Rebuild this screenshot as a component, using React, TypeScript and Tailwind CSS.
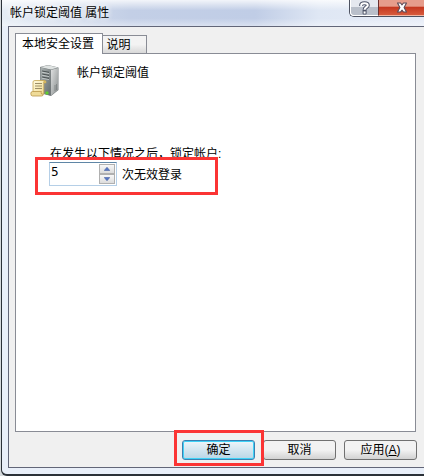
import { useState } from "react";

const pushButtonClass =
  "h-5 w-[73px] rounded-[3px] border text-xs leading-none whitespace-nowrap text-black bg-linear-to-b";

function HelpIcon() {
  const hook = "M2.2 5V4.2C2.2 1.6 8.8 1.6 8.8 4.2C8.8 6.2 5.6 6.2 5.6 8.8";
  return (
    <svg width="11" height="14" viewBox="0 0 11 14" fill="none" aria-hidden="true">
      <path d={hook} stroke="#50566a" strokeWidth="4" />
      <rect x="3.6" y="8.6" width="4" height="5" rx="1" fill="#50566a" />
      <path d={hook} stroke="#fff" strokeWidth="2" />
      <rect x="4.6" y="10.4" width="2" height="2.2" fill="#fff" />
    </svg>
  );
}

function CloseIcon() {
  const shape = "M1 0.5H4L5.5 2.4L7 0.5H10L7.6 5L10 9.5H7L5.5 7.6L4 9.5H1L3.4 5Z";
  return (
    <svg width="12" height="11" viewBox="-0.5 -0.5 12 11" aria-hidden="true">
      <path d={shape} fill="#fff" stroke="#5c4a57" strokeWidth="1.1" strokeLinejoin="round" />
    </svg>
  );
}

function ServerIcon() {
  return (
    <svg width="32" height="34" viewBox="0 0 32 34" aria-hidden="true">
      <defs>
        <linearGradient id="front" x1="0" y1="0" x2="1" y2="1">
          <stop offset="0" stopColor="#a9b0b0" />
          <stop offset="1" stopColor="#666d6e" />
        </linearGradient>
        <linearGradient id="side" x1="0" y1="0" x2="1" y2="1">
          <stop offset="0" stopColor="#dfe1e1" />
          <stop offset="1" stopColor="#8b9090" />
        </linearGradient>
        <linearGradient id="paper" x1="0" y1="0" x2="1" y2="1">
          <stop offset="0" stopColor="#fffbe0" />
          <stop offset="1" stopColor="#f0d88a" />
        </linearGradient>
      </defs>
      <path d="M11 2L19 0L29.5 2.5V25L22 31L11 28Z" fill="#777d7e" />
      <path d="M11.5 2.2L19 0.3L29 2.6L22 4.6Z" fill="#dfe3e2" />
      <path d="M11.5 2.6L21.5 4.8V30.5L11.5 28Z" fill="url(#front)" />
      <path d="M22 5L29 3V24.8L22 30.5Z" fill="url(#side)" />
      <path d="M13 6L20 7.4M13 9L20 10.4M13 12L20 13.4" stroke="#4e5556" strokeWidth="1.2" />
      <path d="M13 7.2L20 8.6M13 10.2L20 11.6M13 13.2L20 14.6" stroke="#d4dada" strokeWidth="0.7" />
      <path d="M26 20V26M27.5 19V25" stroke="#6c7273" strokeWidth="0.6" />
      <path d="M4 17Q4 15.5 6 15.5H16Q14.8 16.5 14.8 18V29H4Z" fill="url(#paper)" stroke="#c7a650" strokeWidth="0.8" />
      <path d="M14.8 18Q14.8 15.5 16.3 15.7Q17.3 16 17 18Z" fill="#e5c66c" stroke="#c7a650" strokeWidth="0.6" />
      <path d="M1.8 28.5Q1.8 26.5 3.5 26.5H12.5Q11.8 27.6 12.5 29Q13.2 30 14.4 29.5Q14 31 12.5 31H3.5Q1.8 31 1.8 28.5Z" fill="#efdb98" stroke="#b9974a" strokeWidth="0.8" />
      <path d="M6 18.5H13M6 21H13M6 23.5H13" stroke="#92835e" strokeWidth="0.9" />
      <rect x="16.5" y="26.5" width="3" height="3" rx="1" fill="#5ed02c" />
    </svg>
  );
}

function SpinButton({ up, onClick }: { up?: boolean; onClick: () => void }) {
  return (
    <button
      type="button"
      aria-label={up ? "增加" : "减少"}
      onClick={onClick}
      className="flex flex-1 items-center justify-center border border-[#b0b0b0] bg-linear-to-b from-[#f8f8f8] to-[#dcdcdc]"
    >
      <svg width="6" height="4" viewBox="0 0 6 4" aria-hidden="true">
        <path d={up ? "M3 0.2L5.8 3.5H0.2Z" : "M3 3.8L5.8 0.5H0.2Z"} fill="#5576c4" stroke="#3b549b" strokeWidth="0.5" />
      </svg>
    </button>
  );
}

export default function App() {
  const [attempts, setAttempts] = useState(5);

  return (
    <div className="flex min-h-screen flex-col bg-[#d5d9dc] pl-px font-['Liberation_Sans','Noto_Sans_CJK_SC',sans-serif] text-xs text-black">
      <div className="flex flex-1 flex-col rounded-bl-md border-b-2 border-l border-[#2b3138] bg-[#e9eff9] pl-1.5">
        <header className="-ml-1.5 flex h-[26px] items-start justify-between bg-[linear-gradient(to_bottom,#ffffffcc,#ffffff00_40%,#ffffff00_70%,#ffffff66),linear-gradient(to_right,#e6edf5,#c3cfe6_30%,#c0cde6_60%,#dfe7f4_75%,#e6ecf7)] pl-2">
          <h1 className="pt-[5px] leading-4 [text-shadow:0_0_6px_white,0_0_6px_white]">帐户锁定阈值 属性</h1>
          <div className="flex h-[17px] rounded-bl-[5px] border-b border-l border-[#4d5261]">
            <button
              type="button"
              aria-label="帮助"
              className="flex w-7 items-center justify-center rounded-bl-sm border-b border-l border-white bg-linear-to-b from-[#e5e8ef] from-45% to-[#b9bfca] to-50%"
            >
              <HelpIcon />
            </button>
            <button
              type="button"
              aria-label="关闭"
              className="flex w-[46px] items-center justify-center border-b border-l border-b-[#f0b6a3] border-l-[#6a3030] bg-linear-to-b from-[#e69c8b] from-40% via-[#c53820] via-50% to-[#d75a3c]"
            >
              <CloseIcon />
            </button>
          </div>
        </header>

        <main className="mb-[6px] flex flex-1 flex-col border-t border-b border-l border-[#626678] bg-[#f0f0f0] pt-[6px] pr-[7px] pb-[7px] pl-[6px]">
          <div role="tablist" className="flex items-end">
            <button
              type="button"
              role="tab"
              aria-selected="true"
              className="relative -mb-px h-[21px] w-[88px] border border-b-0 border-[#898c95] bg-white pr-0.5 leading-4 whitespace-nowrap"
            >
              本地安全设置
            </button>
            <button
              type="button"
              role="tab"
              aria-selected="false"
              className="h-[18px] w-11 border border-b-0 border-l-0 border-[#898c95] bg-linear-to-b from-[#f3f3f3] from-50% to-[#d8d8d8] pr-3 leading-4 whitespace-nowrap"
            >
              说明
            </button>
          </div>

          <section role="tabpanel" className="mr-px flex-1 border border-[#898c95] bg-white pt-[11px] pl-[13px]">
            <div className="flex gap-4">
              <ServerIcon />
              <h2 className="leading-4">帐户锁定阈值</h2>
            </div>

            <form className="mt-[46px] flex flex-col items-start pl-1.5" onSubmit={(e) => e.preventDefault()}>
              <label htmlFor="attempts" className="h-3 pl-[15px] leading-[18px] whitespace-nowrap">
                在发生以下情况之后，锁定帐户:
              </label>
              <div className="relative flex h-[38px] w-[183px] items-start border-[3px] border-[#fb3434] bg-white pt-[2px] pl-[11px]">
                <div className="flex h-6 w-[68px] border border-[#b5cfe7] border-t-[#5f86a6] pr-px">
                  <input
                    id="attempts"
                    type="text"
                    inputMode="numeric"
                    value={attempts}
                    onChange={(e) => setAttempts(Number(e.target.value) || 0)}
                    className="h-[18px] min-w-0 flex-1 pl-px font-['DejaVu_Sans',sans-serif] outline-none"
                  />
                  <div className="flex w-4 flex-col py-px">
                    <SpinButton up onClick={() => setAttempts(attempts + 1)} />
                    <SpinButton onClick={() => setAttempts(Math.max(0, attempts - 1))} />
                  </div>
                </div>
                <span className="pt-[5px] pl-[5px] leading-4 whitespace-nowrap">次无效登录</span>
              </div>
            </form>
          </section>

          <footer className="mt-2 flex justify-end gap-2">
            <div className="relative">
              <button
                type="button"
                className={`${pushButtonClass} block border-[#3c7fb1] from-[#eef6fa] to-[#b9d6e6] shadow-[inset_0_0_0_1px_#3fd2f7]`}
              >
                确定
              </button>
              <div className="pointer-events-none absolute -top-2.5 -right-[9px] -bottom-1.5 -left-2 border-[3px] border-[#fb3434]" />
            </div>
            <button type="button" className={`${pushButtonClass} border-[#707070] from-[#f2f2f2] from-50% to-[#d2d2d2]`}>
              取消
            </button>
            <button type="button" className={`${pushButtonClass} border-[#707070] from-[#f2f2f2] from-50% to-[#d2d2d2]`}>
              应用(<u>A</u>)
            </button>
          </footer>
        </main>
      </div>
    </div>
  );
}
